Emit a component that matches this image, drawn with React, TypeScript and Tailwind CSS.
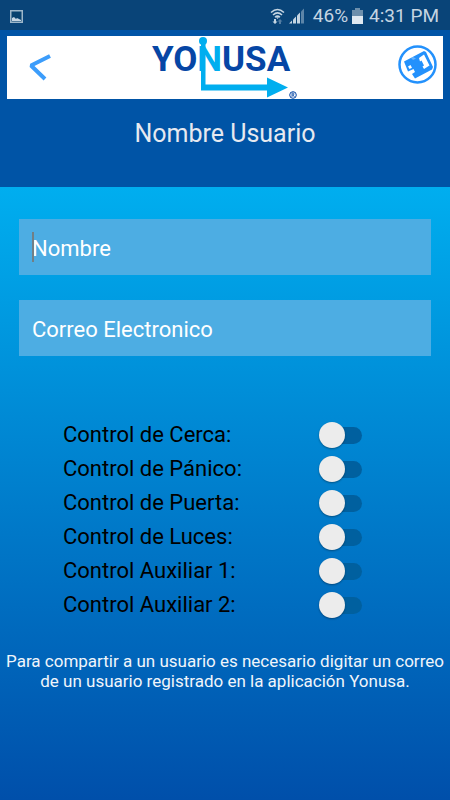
import { useState } from "react";

const CONTROLS = [
  "Control de Cerca:",
  "Control de Pánico:",
  "Control de Puerta:",
  "Control de Luces:",
  "Control Auxiliar 1:",
  "Control Auxiliar 2:"
];

function StatusBar() {
  return (
    <div className="flex h-[30px] items-center justify-between bg-[#094478] pl-2.5 pr-[11px] pt-0.5 text-[#c5d5e2]">
      <svg aria-hidden="true" width="13" height="13" viewBox="0 0 13 13">
        <rect x="0.75" y="0.75" width="11.5" height="11.5" fill="#08426f" stroke="#9db7ca" strokeWidth="1.5" />
        <path d="M2 11V8l2-1 2 2 1-1 2 1 2 1v1z" fill="#c5d5e2" />
      </svg>
      <div className="flex items-center">
        <svg aria-hidden="true" width="15" height="16" viewBox="0 0 15 16" className="mr-1">
          <g fill="none" stroke="currentColor" strokeWidth="1.5">
            <path d="M1 4.500Q7.500-1.500 14 4.500" />
            <path d="M3 7Q7.500 2.800 12 7" />
            <path d="M5 9.200Q7.500 7 10 9.200" />
          </g>
          <path d="M6 9.200h3L7.500 11z" fill="currentColor" />
          <path d="M4 11v2.500H2.500L5 16l2.500-2.500H6V11z" fill="currentColor" />
          <path d="M9 16v-2.500H7.500L10 11l2.500 2.500H11V16z" fill="currentColor" opacity="0.4" />
        </svg>
        <svg aria-hidden="true" width="16" height="16" viewBox="0 0 16 16" className="mr-2">
          <path d="M0 15.500L3 12.500v3z" fill="currentColor" />
          <path d="M4 11.500l3-3v7H4z" fill="currentColor" />
          <path d="M8 7.500l3-3v11H8z" fill="currentColor" />
          <path d="M12 3.500L15 .5v15h-3z" fill="currentColor" opacity="0.45" />
        </svg>
        <span className="text-[19px] leading-6">46%</span>
        <svg aria-hidden="true" width="11" height="16" viewBox="0 0 11 16" className="mx-1">
          <path d="M3 0h5v2h3v14H0V2h3z" fill="#6d8fac" />
          <path d="M0 8h11v8H0z" fill="#e0e9f1" />
        </svg>
        <span className="ml-0.5 text-[19px] leading-6">4:31 PM</span>
      </div>
    </div>
  );
}

function Logo() {
  return (
    <svg role="img" aria-label="Yonusa" width="150" height="62" viewBox="0 0 150 62">
      <text x="2" y="34" fontFamily="Roboto, sans-serif" fontSize="35" fontWeight="700" fill="#0646a5">
        YO<tspan fill="#00aeef">N</tspan>USA
      </text>
      <circle cx="53" cy="4" r="4" fill="#00aeef" />
      <path d="M51 4h4.500v43.500H117V40.500l21 10L117 60.500v-7H51z" fill="#00aeef" />
      <circle cx="143" cy="58" r="3.300" fill="none" stroke="#0646a5" />
      <path d="M142 60v-4h1.500q1 1 0 2H142M143 58l1.500 2" fill="none" stroke="#0646a5" strokeWidth="0.8" />
    </svg>
  );
}

function Banner() {
  return (
    <div className="mx-[7px] mt-1.5 flex h-[63px] items-center justify-between bg-white pl-[22px] pr-1.5">
      <button type="button" aria-label="Regresar">
        <svg aria-hidden="true" width="24" height="30" viewBox="0 0 24 30">
          <path d="M21 3L2 12.500L16 26" fill="none" stroke="#3c9dfb" strokeWidth="4" strokeLinejoin="bevel" />
        </svg>
      </button>
      <Logo />
      <button type="button" aria-label="Dispositivo" className="mt-2 self-start">
        <svg aria-hidden="true" width="40" height="40" viewBox="0 0 40 40">
          <circle cx="20.500" cy="20.500" r="18" fill="none" stroke="#2391fc" strokeWidth="2.500" />
          <path d="M7 17.500L27 7l2 1 7 15-1 2.500L18 34.500l-3-4.500 3-2-1.500-3-5.500 2.500z" fill="#2391fc" />
          <path d="M22 14l5-3.500 5.500 11-5.500 3.500-1.500-2.500 1.500-1-2.500-5-1.500 1z" fill="#fff" />
          <path d="M11 22.500l2.500-1.400 1.500 2.600-2.500 1.400z" fill="#fff" />
          <path d="M14 14l2-1 3 1.500-3 1.500z" fill="#fff" opacity="0.3" />
        </svg>
      </button>
    </div>
  );
}

function ControlSwitch({ id, label }: { id: string; label: string }) {
  const [on, setOn] = useState(false);

  return (
    <div className="flex h-[34px] items-center justify-between">
      <label htmlFor={id} className="text-[22px] leading-7 text-black">
        {label}
      </label>
      <input
        id={id}
        type="checkbox"
        role="switch"
        checked={on}
        onChange={(event) => setOn(event.target.checked)}
        className="relative h-[17px] w-[38px] appearance-none rounded-full bg-[#00609f] before:absolute before:-left-[5px] before:-top-[5px] before:size-[26px] before:rounded-full before:bg-[#ececec] before:shadow-[0_1px_2px_rgba(0,0,0,0.35)] checked:before:left-4"
      />
    </div>
  );
}

export default function App() {
  return (
    <div className="flex min-h-screen flex-col bg-[#0054a6] font-[Roboto,sans-serif]">
      <StatusBar />
      <header className="flex h-[157px] flex-col">
        <Banner />
        <h1 className="mt-[21px] text-center text-[25px] leading-7 text-[#e6e9f0]">Nombre Usuario</h1>
      </header>

      <main className="flex grow flex-col bg-linear-to-b from-[#00aeef] to-[#004faa] pt-8">
        <form className="flex flex-col">
          <div className="flex flex-col gap-[25px] px-[19px]">
            <div className="relative">
              <input
                type="text"
                aria-label="Nombre"
                placeholder="Nombre"
                className="h-14 w-full bg-[#4dade3] px-[13px] pt-0.5 text-[22px] text-white outline-none placeholder:text-white"
              />
              <span aria-hidden="true" className="absolute left-[13px] top-[13px] h-[30px] w-0.5 bg-[#717f86]" />
            </div>
            <input
              type="email"
              aria-label="Correo Electronico"
              placeholder="Correo Electronico"
              className="h-14 w-full bg-[#4dade3] px-[13px] pt-0.5 text-[22px] text-white outline-none placeholder:text-white"
            />
          </div>

          <div className="mt-[62px] flex flex-col pl-[63px] pr-[88px]">
            {CONTROLS.map((label, index) => (
              <ControlSwitch key={label} id={`control-${index}`} label={label} />
            ))}
          </div>
        </form>

        <p className="mt-[29px] text-center text-[17px] leading-5 text-[#f0f5fb]">
          Para compartir a un usuario es necesario digitar un correo
          <br />
          de un usuario registrado en la aplicación Yonusa.
        </p>
      </main>
    </div>
  );
}
